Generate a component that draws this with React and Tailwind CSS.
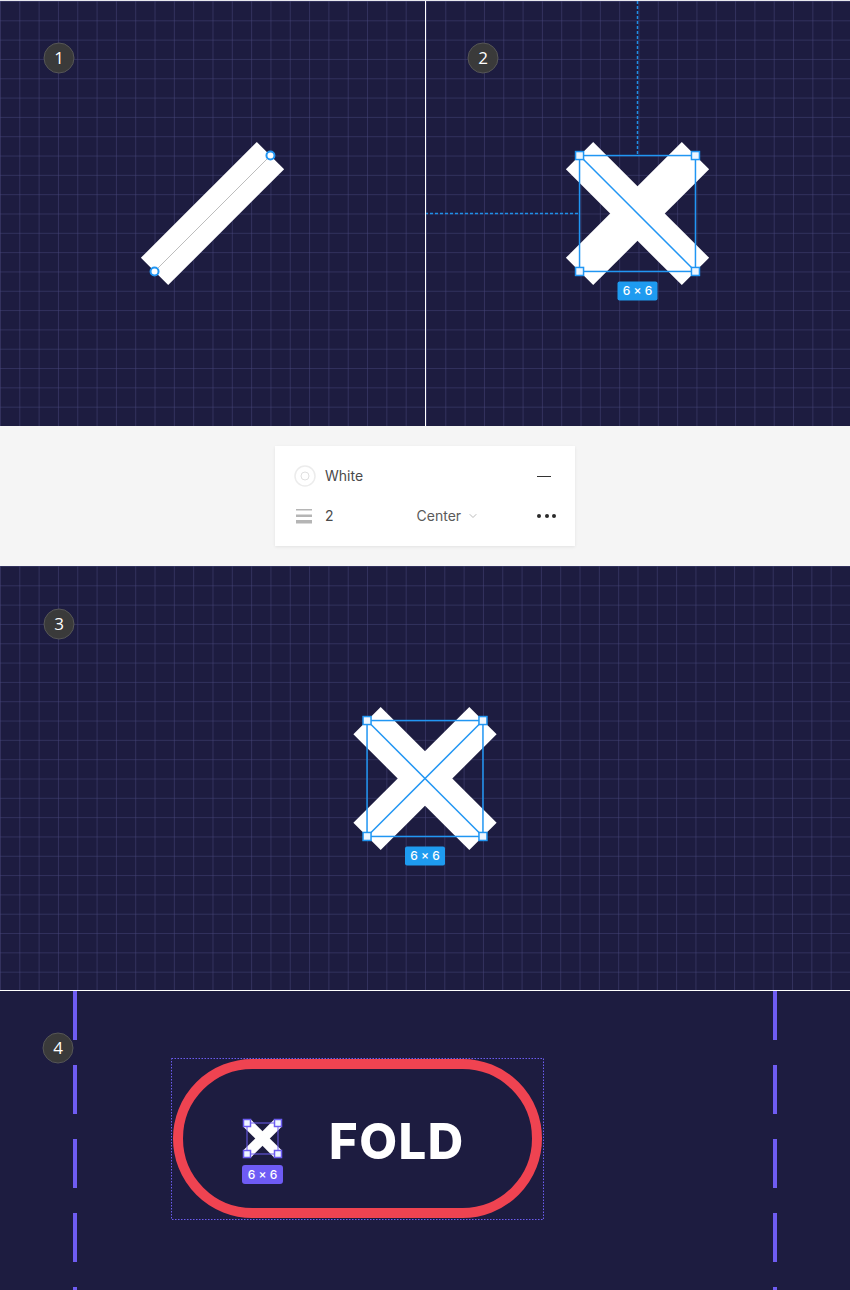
import { ChevronDown } from "lucide-react";

// grid cell of the artboards (22 cells across a half panel)
const U = 425 / 22;
const BG = "#1d1c40";
const BLUE = "#2196f3";
const PURPLE = "#6c5cf0";

function Grid({ id, width, height }) {
  return (
    <>
      <defs>
        <pattern id={id} width={U} height={U} patternUnits="userSpaceOnUse">
          <path d={`M ${U} 0 L 0 0 0 ${U}`} fill="none" stroke="#46457a" strokeWidth="1" />
        </pattern>
      </defs>
      <rect width={width} height={height} fill={BG} />
      <rect width={width} height={height} fill={`url(#${id})`} />
    </>
  );
}

function Badge({ x, y, n }) {
  return (
    <g>
      <circle cx={x} cy={y} r="15" fill="#3a3a3a" stroke="#565656" strokeWidth="1" />
      <text
        x={x}
        y={y + 6}
        textAnchor="middle"
        fill="#ffffff"
        fontSize="17"
        fontFamily="'Open Sans', Inter, sans-serif"
      >
        {n}
      </text>
    </g>
  );
}

function Handle({ x, y, size = 8, color = BLUE }) {
  return (
    <rect
      x={x - size / 2}
      y={y - size / 2}
      width={size}
      height={size}
      fill="#eef6ff"
      stroke={color}
      strokeWidth="1.5"
    />
  );
}

function Cross({ x, y, s, both }) {
  // x, y = top-left of the 6x6 box, s = box size
  return (
    <g>
      <g stroke="#ffffff" strokeWidth={s / 3}>
        <line x1={x} y1={y} x2={x + s} y2={y + s} />
        <line x1={x} y1={y + s} x2={x + s} y2={y} />
      </g>
      <rect x={x} y={y} width={s} height={s} fill="none" stroke={BLUE} strokeWidth="1.5" />
      <line x1={x} y1={y} x2={x + s} y2={y + s} stroke={BLUE} strokeWidth="1.5" />
      {both && <line x1={x} y1={y + s} x2={x + s} y2={y} stroke={BLUE} strokeWidth="1.5" />}
      <Handle x={x} y={y} />
      <Handle x={x + s} y={y} />
      <Handle x={x} y={y + s} />
      <Handle x={x + s} y={y + s} />
      <rect x={x + s / 2 - 20} y={y + s + 10} width="40" height="19" rx="2" fill="#1e9bf0" />
      <text
        x={x + s / 2}
        y={y + s + 24}
        textAnchor="middle"
        fill="#ffffff"
        fontSize="12"
        fontWeight="500"
        fontFamily="Inter, sans-serif"
      >
        6 × 6
      </text>
    </g>
  );
}

function PanelOne() {
  return (
    <svg width="425" height="425" className="block">
      <Grid id="g1" width={425} height={425} />
      <line x1={8 * U} y1={14 * U} x2={14 * U} y2={8 * U} stroke="#ffffff" strokeWidth={2 * U} />
      <line x1={8 * U} y1={14 * U} x2={14 * U} y2={8 * U} stroke="#bdbdbd" strokeWidth="1" />
      <circle cx={8 * U} cy={14 * U} r="4" fill="#ffffff" stroke={BLUE} strokeWidth="2" />
      <circle cx={14 * U} cy={8 * U} r="4" fill="#ffffff" stroke={BLUE} strokeWidth="2" />
      <Badge x={59} y={57} n="1" />
    </svg>
  );
}

function PanelTwo() {
  return (
    <svg width="424" height="425" className="block">
      <Grid id="g2" width={424} height={425} />
      <g transform="translate(-1,0)">
        <g stroke="#1e8fe8" strokeWidth="1.5" strokeDasharray="3 2">
          <line x1={11 * U} y1="0" x2={11 * U} y2={8 * U} />
          <line x1="0" y1={11 * U} x2={8 * U} y2={11 * U} />
        </g>
        <Cross x={8 * U} y={8 * U} s={6 * U} />
        <Badge x={58} y={57} n="2" />
      </g>
    </svg>
  );
}

function PanelThree() {
  return (
    <svg width="850" height="424" className="block">
      <Grid id="g3" width={850} height={424} />
      <Cross x={19 * U} y={8 * U} s={6 * U} both />
      <Badge x={59} y={58} n="3" />
    </svg>
  );
}

function PanelFour() {
  const s = 31;
  const x = 247;
  const y = 132;
  return (
    <svg width="850" height="299" className="block">
      <rect width="850" height="299" fill={BG} />
      <g stroke="#6f5cf2" strokeWidth="4" strokeDasharray="49 25">
        <line x1="75" y1="0" x2="75" y2="299" />
        <line x1="775" y1="0" x2="775" y2="299" />
      </g>
      <rect x="171.5" y="67.5" width="372" height="161" fill="none" stroke={PURPLE} strokeWidth="1" strokeDasharray="1.5 1.5" />
      <rect x="178" y="73" width="359" height="149" rx="74.5" fill="none" stroke="#ef4351" strokeWidth="10" />
      <g stroke="#ffffff" strokeWidth={s / 3}>
        <line x1={x} y1={y} x2={x + s} y2={y + s} />
        <line x1={x} y1={y + s} x2={x + s} y2={y} />
      </g>
      <rect x={x} y={y} width={s} height={s} fill="none" stroke={PURPLE} strokeWidth="1" />
      <Handle x={x} y={y} size={7} color={PURPLE} />
      <Handle x={x + s} y={y} size={7} color={PURPLE} />
      <Handle x={x} y={y + s} size={7} color={PURPLE} />
      <Handle x={x + s} y={y + s} size={7} color={PURPLE} />
      <rect x="242" y="174" width="41" height="19" rx="3" fill="#6e5bf5" />
      <text x="262.5" y="188" textAnchor="middle" fill="#ffffff" fontSize="12" fontWeight="500" fontFamily="Inter, sans-serif">
        6 × 6
      </text>
      <text x="329" y="168" fill="#ffffff" fontSize="49" fontWeight="800" letterSpacing="1.5" fontFamily="Inter, 'Open Sans', sans-serif">
        FOLD
      </text>
      <Badge x={58} y={57} n="4" />
    </svg>
  );
}

function StrokePanel() {
  return (
    <div className="flex h-[140px] items-center justify-center bg-[#f5f5f5]">
      <div className="w-[300px] h-[100px] bg-white shadow-[0_1px_3px_rgba(0,0,0,0.08)] px-5 py-2.5 font-['Inter',sans-serif] text-sm text-[#4a4a4a]">
        <div className="flex h-10 items-center">
          <svg width="22" height="22" className="-ml-[1px]">
            <circle cx="11" cy="11" r="10" fill="none" stroke="#ececec" strokeWidth="1.5" />
            <circle cx="11" cy="11" r="4" fill="none" stroke="#e0e0e0" strokeWidth="1" />
          </svg>
          <span className="ml-[9px]">White</span>
          <span className="ml-auto mr-[4px] h-px w-[14px] bg-[#333]" />
        </div>
        <div className="flex h-10 items-center">
          <svg width="17" height="16" className="ml-[1px]">
            <rect x="0" y="1" width="16" height="1.5" fill="#b5b5b5" />
            <rect x="0" y="6.5" width="16" height="2.5" fill="#b5b5b5" />
            <rect x="0" y="12" width="16" height="3.5" fill="#b5b5b5" />
          </svg>
          <span className="ml-[12px]">2</span>
          <span className="ml-[83px] text-[#5a5a5a]">Center</span>
          <ChevronDown size={12} className="ml-[6px] text-[#bbbbbb]" />
          <span className="ml-auto flex gap-[3.5px] -mr-[1px]">
            <span className="h-[4px] w-[4px] rounded-full bg-[#2a2a2a]" />
            <span className="h-[4px] w-[4px] rounded-full bg-[#2a2a2a]" />
            <span className="h-[4px] w-[4px] rounded-full bg-[#2a2a2a]" />
          </span>
        </div>
      </div>
    </div>
  );
}

export default function App() {
  return (
    <div className="w-[850px] h-[1290px] bg-white flex flex-col overflow-hidden">
      <div className="h-px bg-[#e8e8ee]" />
      <div className="flex">
        <PanelOne />
        <div className="w-px bg-white" />
        <PanelTwo />
      </div>
      <StrokePanel />
      <PanelThree />
      <div className="h-px bg-white" />
      <PanelFour />
    </div>
  );
}
